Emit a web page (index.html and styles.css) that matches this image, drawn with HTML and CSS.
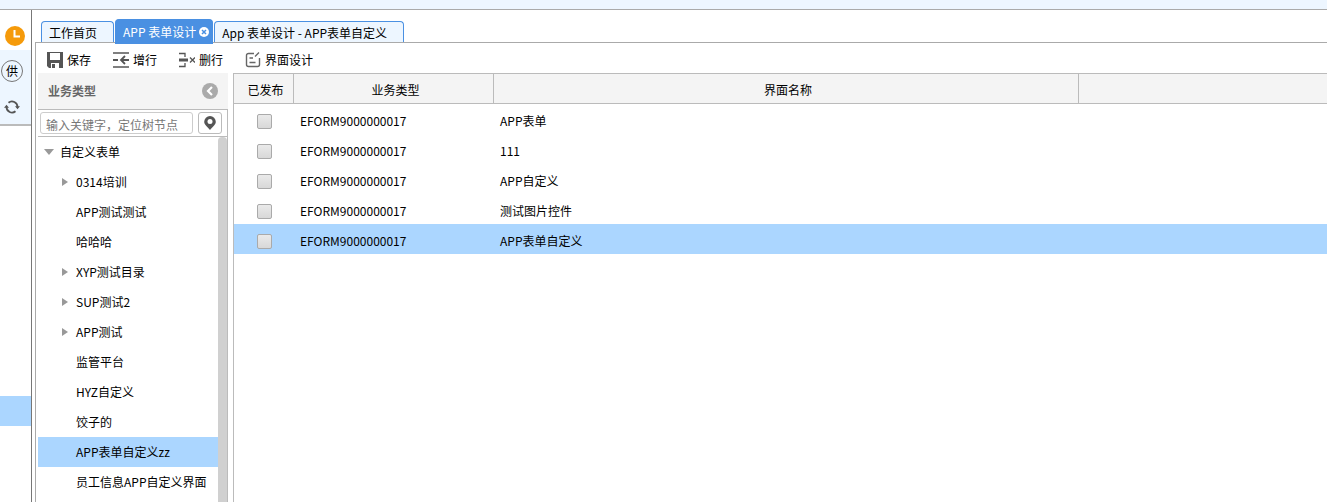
FILE: index.html
```html
<!DOCTYPE html>
<html lang="zh-CN">
<head>
  <meta charset="UTF-8">
  <meta name="viewport" content="width=device-width, initial-scale=1.0">
  <title>APP 表单设计</title>
  <link rel="stylesheet" href="styles.css">
</head>
<body>
  <div class="topbar"></div>
  <div class="page">
    <!-- left rail -->
    <nav class="rail">
      <button type="button" class="rail-btn rail-clock" aria-label="最近">
        <svg width="20" height="20" viewBox="0 0 20 20"><circle cx="10" cy="10" r="10" fill="#f59a0a"/><path d="M9.500 4v6.500H15" fill="none" stroke="#fff" stroke-width="2"/></svg>
      </button>
      <div class="rail-tools">
        <button type="button" class="rail-btn"><span class="rail-badge">供</span></button>
        <button type="button" class="rail-btn" aria-label="刷新">
          <svg width="16" height="14" viewBox="0 0 16 14"><g fill="none" stroke="#555" stroke-width="1.800"><path d="M4.500 2.700A5.500 5.500 0 0 1 13.500 7"/><path d="M11.500 11.300A5.500 5.500 0 0 1 2.500 7"/></g><path d="M11 6.300h5l-2.500 3zM5 7.700H0l2.500-3z" fill="#555"/></svg>
        </button>
      </div>
      <div class="rail-current"></div>
    </nav>

    <main class="main">
      <div class="tabs">
        <div class="tab"><a href="#home">工作首页</a></div>
        <div class="tab active">
          <a href="#design">APP 表单设计</a>
          <button type="button" class="tab-close" aria-label="关闭">
            <svg width="10" height="10" viewBox="0 0 10 10"><circle cx="5" cy="5" r="5" fill="#fff"/><path d="M3 3l4 4M7 3L3 7" stroke="#4a90e2" stroke-width="1.500"/></svg>
          </button>
        </div>
        <div class="tab"><a href="#custom">App 表单设计 - APP表单自定义</a></div>
      </div>

      <div class="content">
        <div class="toolbar">
          <button type="button">
            <svg width="16" height="16" viewBox="0 0 16 16"><path d="M0 0h16v16H2l-2-2z" fill="#555"/><path d="M3 1h10v7H3zM4 11h8v5H4z" fill="#fff"/><path d="M5 12h3v4H5z" fill="#555"/></svg>
            保存
          </button>
          <button type="button">
            <svg width="16" height="16" viewBox="0 0 16 16" fill="none" stroke="#555"><path d="M0 1h16M0 15h16" stroke-width="1.500"/><path d="M0 8h5M8 8h8" stroke-width="2"/><path d="M12 4L8 8l4 4" stroke-width="1.800"/></svg>
            增行
          </button>
          <button type="button">
            <svg width="16" height="16" viewBox="0 0 16 16" fill="none" stroke="#555"><path d="M0 1.500h6V5M0 14.500h6V11" stroke-width="1.300"/><path d="M0 8h9" stroke-width="3"/><path d="M11 5.500l5 5M16 5.500l-5 5" stroke-width="1.300"/></svg>
            删行
          </button>
          <button type="button">
            <svg width="16" height="16" viewBox="0 0 16 16" fill="none" stroke="#666" stroke-width="1.400"><path d="M9 1.500H3.500a2 2 0 0 0-2 2v9a2 2 0 0 0 2 2h9a2 2 0 0 0 2-2V6"/><path d="M10 4.500L14 .5M4.500 6H8M4.500 10.500h6"/></svg>
            界面设计
          </button>
        </div>

        <div class="panels">
          <aside class="side">
            <div class="side-head">
              <h2>业务类型</h2>
              <button type="button" aria-label="收起">
                <svg width="16" height="16" viewBox="0 0 16 16"><circle cx="8" cy="8" r="8" fill="#aaa"/><path d="M10 4L6 8l4 4" fill="none" stroke="#fff" stroke-width="2.200"/></svg>
              </button>
            </div>
            <div class="search">
              <input type="text" aria-label="定位树节点" placeholder="输入关键字，定位树节点">
              <button type="button" aria-label="定位">
                <svg width="12" height="14" viewBox="0 0 12 14"><path d="M6 0a5.800 5.800 0 0 1 5.800 5.800C11.800 9 8 11.500 6 14 4 11.500.2 9 .2 5.800A5.800 5.800 0 0 1 6 0z" fill="#555"/><circle cx="6" cy="5.500" r="2.500" fill="#fff"/></svg>
              </button>
            </div>
            <div class="tree-wrap">
              <ul class="tree">
                <li class="root open">自定义表单</li>
                <li class="closed">0314培训</li>
                <li>APP测试测试</li>
                <li>哈哈哈</li>
                <li class="closed">XYP测试目录</li>
                <li class="closed">SUP测试2</li>
                <li class="closed">APP测试</li>
                <li>监管平台</li>
                <li>HYZ自定义</li>
                <li>饺子的</li>
                <li class="selected">APP表单自定义zz</li>
                <li>员工信息APP自定义界面</li>
              </ul>
              <div class="scrollbar"></div>
            </div>
          </aside>

          <section class="grid">
            <table>
              <colgroup>
                <col class="col-check">
                <col class="col-type">
                <col class="col-name">
                <col>
              </colgroup>
              <thead>
                <tr><th>已发布</th><th>业务类型</th><th>界面名称</th><th></th></tr>
              </thead>
              <tbody>
                <tr><td><input type="checkbox" aria-label="已发布 APP表单"></td><td>EFORM9000000017</td><td>APP表单</td><td></td></tr>
                <tr><td><input type="checkbox" aria-label="已发布 111"></td><td>EFORM9000000017</td><td>111</td><td></td></tr>
                <tr><td><input type="checkbox" aria-label="已发布 APP自定义"></td><td>EFORM9000000017</td><td>APP自定义</td><td></td></tr>
                <tr><td><input type="checkbox" aria-label="已发布 测试图片控件"></td><td>EFORM9000000017</td><td>测试图片控件</td><td></td></tr>
                <tr class="selected"><td><input type="checkbox" aria-label="已发布 APP表单自定义"></td><td>EFORM9000000017</td><td>APP表单自定义</td><td></td></tr>
              </tbody>
            </table>
          </section>
        </div>
      </div>
    </main>
  </div>
</body>
</html>
```
FILE: styles.css
```css
* {
  box-sizing: border-box;
}
body {
  margin: 0;
  height: 100vh;
  display: flex;
  flex-direction: column;
  overflow: hidden;
  background: #fff;
  color: #000;
  font-family: "Noto Sans CJK SC", sans-serif;
  font-size: 12px;
  line-height: 18px;
}
button {
  display: flex;
  align-items: center;
  justify-content: center;
  padding: 0;
  border: 0;
  background: none;
  color: inherit;
  font: inherit;
}
a {
  color: inherit;
  text-decoration: none;
}
svg {
  display: block;
  flex: none;
}
.topbar {
  flex: none;
  height: 10px;
  background: #edf6ff;
  border-bottom: 1px solid #aaa;
}
.page {
  flex: 1;
  display: flex;
  min-height: 0;
}

/* left rail */
.rail {
  flex: none;
  width: 32px;
  border-right: 1px solid #777;
}
.rail-btn {
  width: 100%;
  height: 36px;
}
.rail-clock {
  height: 40px;
  padding: 12px 2px 0 0;
}
.rail-tools {
  height: 76px;
  padding-top: 3px;
  background: #edf6ff;
  border-bottom: 2px solid #bbb;
}
.rail-tools .rail-btn {
  padding-right: 7px;
}
.rail-badge {
  width: 22px;
  height: 22px;
  flex: none;
  line-height: 20px;
  border: 1px solid #777;
  border-radius: 50%;
}
.rail-current {
  height: 30px;
  margin-top: 270px;
  background: #abd6ff;
}

/* tabs */
.main {
  flex: 1;
  min-width: 0;
  display: flex;
  flex-direction: column;
  padding-left: 3px;
}
.tabs {
  flex: none;
  display: flex;
  align-items: flex-end;
  gap: 1px;
  height: 33px;
  padding-left: 6px;
  border-bottom: 1px solid #aaa;
}
.tab {
  display: flex;
  align-items: center;
  height: 21px;
  padding: 2px 16px 0 7px;
  border: 1px solid #4a90e2;
  border-bottom: 0;
  border-radius: 4px 4px 0 0;
  background: #edf6ff;
}
.tab.active {
  gap: 3px;
  height: 25px;
  margin-bottom: -2px;
  padding: 0 3px 0 7px;
  background: #4a90e2;
  color: #fff;
}

/* toolbar */
.content {
  flex: 1;
  display: flex;
  flex-direction: column;
  min-height: 0;
  padding-left: 2px;
  border-left: 1px solid #aaa;
}
.toolbar {
  flex: none;
  display: flex;
  gap: 22px;
  height: 30px;
  padding: 3px 9px 0;
}
.toolbar button {
  gap: 4px;
}

/* tree panel */
.panels {
  flex: 1;
  display: flex;
  gap: 5px;
  min-height: 0;
}
.side {
  flex: none;
  width: 190px;
  display: flex;
  flex-direction: column;
  min-height: 0;
}
.side-head {
  display: flex;
  align-items: center;
  justify-content: space-between;
  height: 36px;
  padding: 0 10px;
  background: #f4f4f4;
  color: #666;
}
.side-head h2 {
  margin: 0;
  font-size: 12px;
}
.search {
  display: flex;
  gap: 5px;
  padding: 2px 5px 2px 2px;
  border: 1px solid #bbb;
  border-left: 0;
}
.search input {
  flex: 1;
  min-width: 0;
  height: 22px;
  padding: 2px 5px 0;
  border: 1px solid #ccc;
  border-radius: 3px;
  font: inherit;
}
.search input::placeholder {
  color: #777;
}
.search button {
  width: 24px;
  height: 22px;
  border: 1px solid #bbb;
  border-radius: 3px;
}
.tree-wrap {
  flex: 1;
  display: flex;
  min-height: 0;
  overflow: hidden;
  border-right: 1px solid #bbb;
}
.tree {
  flex: 1;
  margin: 0;
  padding: 0;
  list-style: none;
}
.tree li {
  display: flex;
  align-items: center;
  height: 30px;
  padding-left: 38px;
}
.tree li.root {
  padding-left: 6px;
}
.tree li.closed {
  padding-left: 24px;
}
.tree .open::before {
  content: "";
  margin-right: 6px;
  border: 5px solid transparent;
  border-top: 6px solid #999;
  border-bottom: 0;
}
.tree .closed::before {
  content: "";
  margin-right: 8px;
  border: 4px solid transparent;
  border-left: 6px solid #999;
  border-right: 0;
}
.selected {
  background: #abd6ff;
}
.scrollbar {
  width: 9px;
  border-radius: 4px 4px 0 0;
  background: #d0d0d0;
}

/* grid */
.grid {
  flex: 1;
  min-width: 0;
  border-left: 1px solid #bbb;
}
.grid table {
  width: 100%;
  table-layout: fixed;
  border-collapse: separate;
  border-spacing: 0;
}
.col-check {
  width: 60px;
}
.col-type {
  width: 200px;
}
.col-name {
  width: 585px;
}
.grid th {
  height: 31px;
  padding: 2px 0 0 4px;
  border: 1px solid #bbb;
  border-left: 0;
  background: #f4f4f4;
  font-weight: normal;
}
.grid th:last-child {
  border-right: 0;
}
.grid td {
  height: 30px;
  padding: 3px 6px 0;
}
.grid td:first-child {
  padding: 5px 0 0;
  text-align: center;
}
.grid input {
  appearance: none;
  display: block;
  width: 15px;
  height: 15px;
  margin: 0 auto;
  border: 1px solid #aaa;
  border-radius: 2px;
  background: linear-gradient(#eaeaea, #d8d8d8);
}
```
